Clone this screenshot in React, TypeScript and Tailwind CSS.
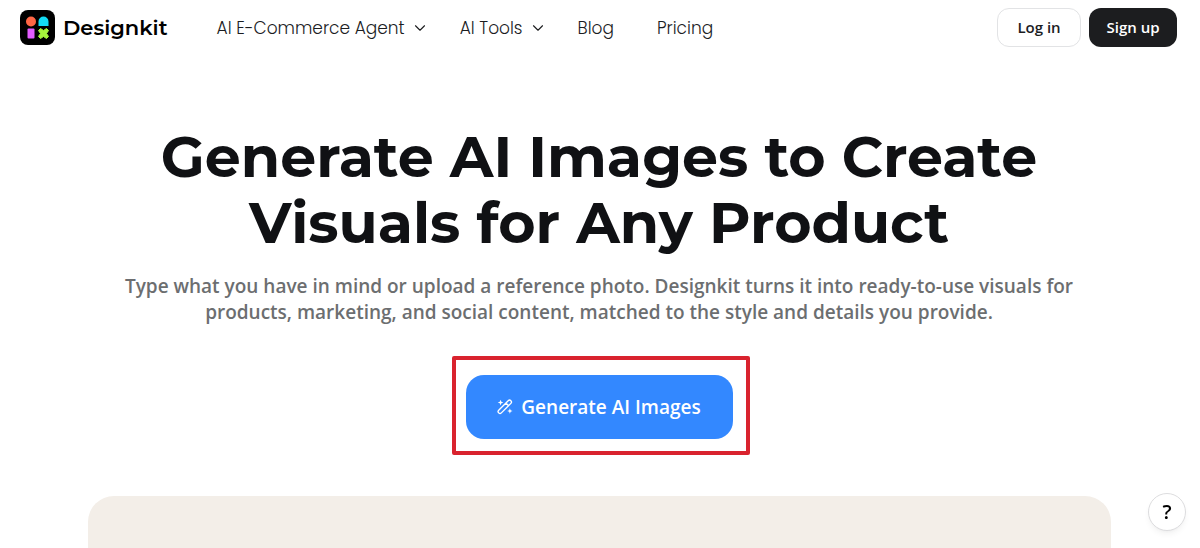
import { ChevronDown } from "lucide-react";

const navItems = [
  { label: "AI E-Commerce Agent", hasMenu: true },
  { label: "AI Tools", hasMenu: true },
  { label: "Blog", hasMenu: false },
  { label: "Pricing", hasMenu: false },
];

function Logo() {
  return (
    <a href="#" className="flex items-center gap-2">
      <svg width="35" height="35" viewBox="0 0 35 35" aria-hidden="true">
        <rect width="35" height="35" rx="8" fill="#000" />
        <circle cx="11" cy="11.5" r="5" fill="#ff6645" />
        <path d="M18.500 16v-4.500a5 5 0 0 1 10 0V16z" fill="#12dcf5" />
        <rect x="7.500" y="18.500" width="7" height="10" rx="1" fill="#e45cff" />
        <path
          d="M20.500 18.500l3 2 3-2 2 2-2 3 2 3-2 2-3-2-3 2-2-2 2-3-2-3z"
          fill="#a6f43c"
          stroke="#a6f43c"
          strokeLinejoin="round"
        />
      </svg>
      <span className="font-[Montserrat,Inter,sans-serif] text-[21px] leading-8 font-semibold text-black">
        Designkit
      </span>
    </a>
  );
}

function WandIcon() {
  return (
    <svg
      width="16"
      height="16"
      viewBox="0 0 18 18"
      fill="none"
      stroke="currentColor"
      strokeWidth="1.5"
      strokeLinecap="round"
      strokeLinejoin="round"
      aria-hidden="true"
    >
      <path d="M1.900 12.600 12.600 1.900a2.100 2.100 0 0 1 3 3L4.900 15.600a2.100 2.100 0 0 1-3-3zM10 4.500l3 3" />
      <path
        d="M4 .800l.9 2.300 2.300.9-2.300.9L4 7.200l-.9-2.300L.800 4l2.300-.9zM14.500 10.500l.8 2.200 2.200.8-2.200.8-.8 2.200-.8-2.200-2.200-.8 2.200-.8z"
        fill="currentColor"
        stroke="none"
      />
    </svg>
  );
}

function Header() {
  return (
    <header className="flex h-[55px] items-center justify-between pr-[23px] pl-5">
      <div className="flex items-center gap-[49px]">
        <Logo />
        <nav className="flex items-center gap-[43px] font-[Poppins,Inter,sans-serif] text-[17px] leading-6 font-light text-[#1c1d1f]">
          {navItems.map((item) =>
            item.hasMenu ? (
              <button
                key={item.label}
                type="button"
                className="-mr-3 flex items-center gap-1.5"
              >
                {item.label}
                <ChevronDown size={18} strokeWidth={1.5} />
              </button>
            ) : (
              <a key={item.label} href="#">
                {item.label}
              </a>
            ),
          )}
        </nav>
      </div>
      <div className="flex items-center gap-2 text-[15px] font-semibold">
        <button
          type="button"
          className="h-[39px] w-[84px] rounded-xl border border-[#e2e3e5] bg-white text-[#1c1d1f]"
        >
          Log in
        </button>
        <button
          type="button"
          className="h-[39px] w-[88px] rounded-xl bg-[#1c1d1f] text-white"
        >
          Sign up
        </button>
      </div>
    </header>
  );
}

export default function App() {
  return (
    <div className="flex min-h-screen flex-col bg-white font-['Open_Sans',sans-serif]">
      <Header />
      <main className="flex flex-1 flex-col items-center pt-[69px] pr-0.5">
        <h1 className="text-center font-[Montserrat,Inter,sans-serif] text-[57px] leading-[66px] font-bold text-[#101114]">
          Generate AI Images to Create
          <br />
          Visuals for Any Product
        </h1>
        <p className="mt-[17px] max-w-[1000px] text-center text-[19px] leading-[26px] font-semibold text-[#6c6e70]">
          Type what you have in mind or upload a reference photo. Designkit
          turns it into ready-to-use visuals for products, marketing, and social
          content, matched to the style and details you provide.
        </p>
        <div className="relative mt-[50px]">
          <button
            type="button"
            className="flex h-16 w-[267px] items-center justify-center gap-2 rounded-[18px] bg-[#3388ff] text-[19px] font-semibold text-white"
          >
            <WandIcon />
            Generate AI Images
          </button>
          <span className="pointer-events-none absolute -top-[19px] -right-[17px] -bottom-4 -left-[14px] rounded-xs border-4 border-[#d9232e]" />
        </div>
        <div className="mt-[57px] flex w-full flex-1 pr-[87px] pl-[88px]">
          <div className="flex-1 rounded-t-[26px] bg-[#f3eee8]" />
        </div>
      </main>
      <button
        type="button"
        aria-label="Help"
        className="fixed right-[14px] bottom-[17px] size-[38px] rounded-full border border-[#dcdcde] bg-white text-xl font-semibold text-black shadow-md shadow-black/5"
      >
        ?
      </button>
    </div>
  );
}
